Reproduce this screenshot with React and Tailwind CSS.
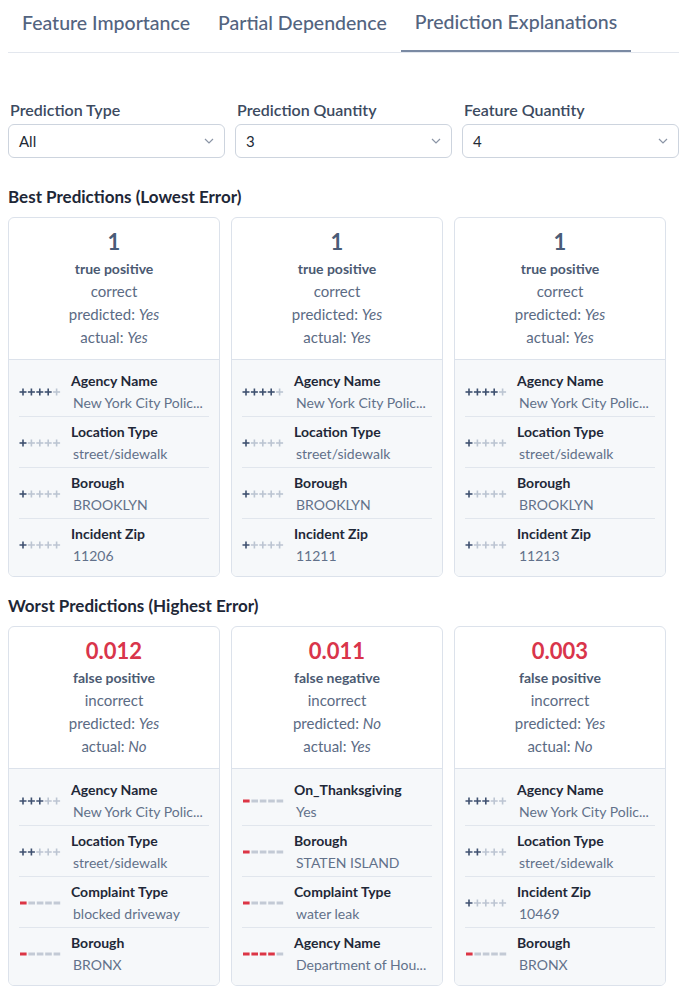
import React from "react";

const best = [
  {
    score: "1",
    good: true,
    kind: "true positive",
    verdict: "correct",
    predicted: "Yes",
    actual: "Yes",
    rows: [
      { name: "Agency Name", value: "New York City Polic...", sign: "+", n: 4 },
      { name: "Location Type", value: "street/sidewalk", sign: "+", n: 1 },
      { name: "Borough", value: "BROOKLYN", sign: "+", n: 1 },
      { name: "Incident Zip", value: "11206", sign: "+", n: 1 },
    ],
  },
  {
    score: "1",
    good: true,
    kind: "true positive",
    verdict: "correct",
    predicted: "Yes",
    actual: "Yes",
    rows: [
      { name: "Agency Name", value: "New York City Polic...", sign: "+", n: 4 },
      { name: "Location Type", value: "street/sidewalk", sign: "+", n: 1 },
      { name: "Borough", value: "BROOKLYN", sign: "+", n: 1 },
      { name: "Incident Zip", value: "11211", sign: "+", n: 1 },
    ],
  },
  {
    score: "1",
    good: true,
    kind: "true positive",
    verdict: "correct",
    predicted: "Yes",
    actual: "Yes",
    rows: [
      { name: "Agency Name", value: "New York City Polic...", sign: "+", n: 4 },
      { name: "Location Type", value: "street/sidewalk", sign: "+", n: 1 },
      { name: "Borough", value: "BROOKLYN", sign: "+", n: 1 },
      { name: "Incident Zip", value: "11213", sign: "+", n: 1 },
    ],
  },
];

const worst = [
  {
    score: "0.012",
    good: false,
    kind: "false positive",
    verdict: "incorrect",
    predicted: "Yes",
    actual: "No",
    rows: [
      { name: "Agency Name", value: "New York City Polic...", sign: "+", n: 3 },
      { name: "Location Type", value: "street/sidewalk", sign: "+", n: 2 },
      { name: "Complaint Type", value: "blocked driveway", sign: "-", n: 1 },
      { name: "Borough", value: "BRONX", sign: "-", n: 1 },
    ],
  },
  {
    score: "0.011",
    good: false,
    kind: "false negative",
    verdict: "incorrect",
    predicted: "No",
    actual: "Yes",
    rows: [
      { name: "On_Thanksgiving", value: "Yes", sign: "-", n: 1 },
      { name: "Borough", value: "STATEN ISLAND", sign: "-", n: 1 },
      { name: "Complaint Type", value: "water leak", sign: "-", n: 1 },
      { name: "Agency Name", value: "Department of Hou...", sign: "-", n: 4 },
    ],
  },
  {
    score: "0.003",
    good: false,
    kind: "false positive",
    verdict: "incorrect",
    predicted: "Yes",
    actual: "No",
    rows: [
      { name: "Agency Name", value: "New York City Polic...", sign: "+", n: 3 },
      { name: "Location Type", value: "street/sidewalk", sign: "+", n: 2 },
      { name: "Incident Zip", value: "10469", sign: "+", n: 1 },
      { name: "Borough", value: "BRONX", sign: "-", n: 1 },
    ],
  },
];

function Strength({ sign, n }) {
  const items = [0, 1, 2, 3, 4];
  if (sign === "+") {
    return (
      <svg width="42" height="10" viewBox="0 0 42 10" className="shrink-0">
        {items.map((i) => {
          const cx = 4 + i * 8.4;
          const c = i < n ? "#3f5170" : "#bcc5d2";
          return (
            <g key={i} stroke={c} strokeWidth="1.6">
              <line x1={cx - 3.5} y1="5" x2={cx + 3.5} y2="5" />
              <line x1={cx} y1="1.5" x2={cx} y2="8.5" />
            </g>
          );
        })}
      </svg>
    );
  }
  return (
    <svg width="42" height="10" viewBox="0 0 42 10" className="shrink-0">
      {items.map((i) => (
        <rect
          key={i}
          x={1 + i * 8.4}
          y="3.5"
          width="6.6"
          height="3"
          fill={i < n ? "#dc3545" : "#c3cad5"}
        />
      ))}
    </svg>
  );
}

function Card({ p }) {
  return (
    <div className="w-[212px] rounded-md border border-[#dce2eb] bg-white overflow-hidden">
      <div className="pt-[9px] pb-[10px] text-center border-b border-[#dce2eb]">
        <div
          className={`text-[22px] leading-[30px] font-bold ${
            p.good ? "text-[#4a5c78]" : "text-[#d9354b]"
          }`}
        >
          {p.score}
        </div>
        <div className="text-[14px] leading-[23px] font-bold text-[#4b5a72]">{p.kind}</div>
        <div className="text-[15px] leading-[23px] text-[#5b6b84]">{p.verdict}</div>
        <div className="text-[15px] leading-[23px] text-[#5b6b84]">
          predicted: <span className="italic">{p.predicted}</span>
        </div>
        <div className="text-[15px] leading-[23px] text-[#5b6b84]">
          actual: <span className="italic">{p.actual}</span>
        </div>
      </div>
      <div className="bg-[#f6f8fa] px-[10px] pt-[6px] pb-[7px]">
        {p.rows.map((r, i) => (
          <div
            key={i}
            className={`flex items-center gap-[10px] pt-[4px] pb-[3px] ${
              i < p.rows.length - 1 ? "border-b border-[#e1e6ed]" : ""
            }`}
          >
            <Strength sign={r.sign} n={r.n} />
            <div className="min-w-0 flex-1">
              <div className="text-[14px] leading-[22px] font-bold text-[#1f2838] whitespace-nowrap">
                {r.name}
              </div>
              <div className="text-[14px] leading-[21px] text-[#62718a] whitespace-nowrap pl-[2px]">
                {r.value}
              </div>
            </div>
          </div>
        ))}
      </div>
    </div>
  );
}

function Select({ label, value }) {
  return (
    <div>
      <div className="pl-[2px] text-[16px] leading-[20px] font-semibold text-[#3c4a5f] mb-[4px]">
        {label}
      </div>
      <div className="h-[34px] rounded-md border border-[#cdd4de] bg-white flex items-center justify-between pl-[10px] pr-[10px]">
        <span className="text-[15px] text-[#222a36]">{value}</span>
        <svg width="10" height="6" viewBox="0 0 10 6">
          <path d="M1 1l4 4 4-4" fill="none" stroke="#8b95a6" strokeWidth="1.2" />
        </svg>
      </div>
    </div>
  );
}

export default function App() {
  const tabs = ["Feature Importance", "Partial Dependence", "Prediction Explanations"];
  return (
    <div className="min-h-screen bg-white font-['Lato','Liberation_Sans',sans-serif] pb-6">
      {/* tabs */}
      <div className="mx-2 flex border-b border-[#e3e7ee]">
        {tabs.map((t, i) => (
          <div
            key={t}
            className={`px-[14px] h-[52px] pb-[6px] flex items-center text-[19.5px] font-medium text-[#53647f] ${
              i === 2 ? "border-b-2 border-[#7a8aa3] -mb-px" : ""
            }`}
          >
            {t}
          </div>
        ))}
      </div>

      {/* filters */}
      <div className="px-2 pt-[47px] grid grid-cols-3 gap-[10px]">
        <Select label="Prediction Type" value="All" />
        <Select label="Prediction Quantity" value="3" />
        <Select label="Feature Quantity" value="4" />
      </div>

      <div className="px-2">
        <h2 className="mt-[28px] mb-[9px] text-[17px] leading-[22px] font-bold text-[#1e2737]">
          Best Predictions (Lowest Error)
        </h2>
        <div className="flex gap-[11px]">
          {best.map((p, i) => (
            <Card key={i} p={p} />
          ))}
        </div>

        <h2 className="mt-[18px] mb-[9px] text-[17px] leading-[22px] font-bold text-[#1e2737]">
          Worst Predictions (Highest Error)
        </h2>
        <div className="flex gap-[11px]">
          {worst.map((p, i) => (
            <Card key={i} p={p} />
          ))}
        </div>
      </div>
    </div>
  );
}
